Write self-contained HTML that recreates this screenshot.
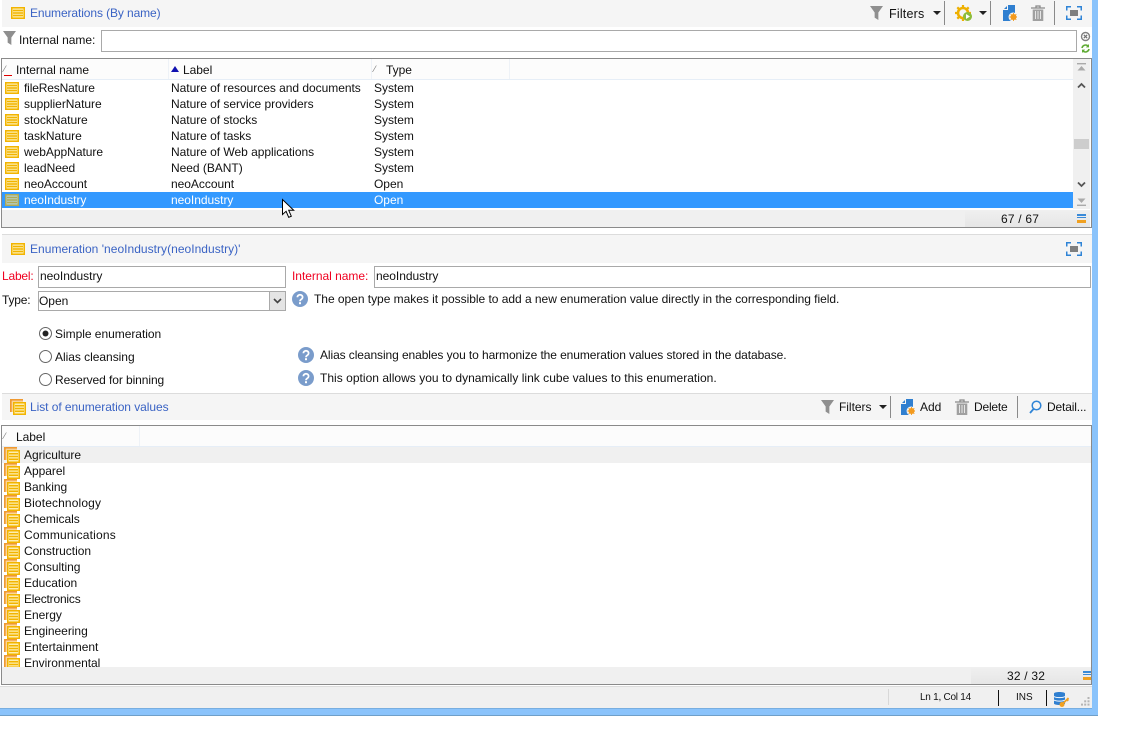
<!DOCTYPE html>
<html><head><meta charset="utf-8"><style>
html,body{margin:0;padding:0;width:1128px;height:746px;background:#fff;overflow:hidden}
body{position:relative;font-family:"Liberation Sans",sans-serif;font-size:12px;color:#111;letter-spacing:-.03px}
.a{position:absolute}
.t{position:absolute;white-space:nowrap;line-height:16px;height:16px}
.bar{position:absolute;background:#f5f5f5}
.blue{color:#3a63c4;letter-spacing:-.1px}
.red{color:#f00020}
.inp{position:absolute;background:#fff;border:1px solid #a9a9a9;box-sizing:border-box;line-height:19px;padding-left:1px}
.sep{position:absolute;width:1px;background:#8a8a8a}
svg{position:absolute;overflow:visible}
.row{position:absolute;height:16px;line-height:16px;white-space:nowrap}
</style></head><body>
<svg width="0" height="0" style="position:absolute">
<defs>
<symbol id="enum" viewBox="0 0 14 12"><rect x=".75" y=".75" width="12.5" height="10.500" fill="#fdeeb0" stroke="#f2b400" stroke-width="1.500"/><path d="M2 3.500h10M2 6h10M2 8.500h10" stroke="#f2b400" stroke-width="1.500"/></symbol>
<symbol id="enums" viewBox="0 0 16 16"><path d="M.9 13V.9H13" fill="none" stroke="#f09a30" stroke-width="1.800"/><rect x="2" y="2" width="11" height="11" fill="#fbc878" opacity=".75"/><rect x="3.750" y="3.750" width="11.500" height="11.500" fill="#fdeeb0" stroke="#f2b400" stroke-width="1.500"/><path d="M5 6.800h9M5 9.500h9M5 12.200h9" stroke="#f2b400" stroke-width="1.500"/></symbol>
<symbol id="funnel" viewBox="0 0 14 15"><path d="M0 0h14L9 7v8L5 12.500V7z" fill="#8f8f8f"/></symbol>
<symbol id="help" viewBox="0 0 16 16"><circle cx="8" cy="8" r="8" fill="#7a9ccb"/><path d="M5.400 6.200a2.600 2.400 0 1 1 4 2c-1 .7-1.400 1-1.400 2" fill="none" stroke="#fff" stroke-width="1.700"/><rect x="7" y="11.200" width="2" height="2" fill="#fff"/></symbol>
<symbol id="add" viewBox="0 0 14 16"><path d="M5 0h7v8a4 4 0 0 0-4 8H0V5h5z" fill="#2f7fd0"/><path d="M1 4l3-3v3z" fill="#2f7fd0"/><circle cx="10.500" cy="12" r="3" fill="#f39a1e"/><path d="M10.500 8v8M6.500 12h8M7.700 9.200l5.600 5.600M13.300 9.200l-5.600 5.600" stroke="#f39a1e" stroke-width=".9"/></symbol>
<symbol id="trash" viewBox="0 0 14 16"><path d="M0 3h14M5 3V1h4v2" fill="none" stroke="#8a8a8a" stroke-width="1.300"/><path d="M1.700 4.500h10.600V16H1.700z" fill="#a0a0a0"/><path d="M4.500 6v8M7 6v8M9.500 6v8" stroke="#e6e6e6" stroke-width="1"/></symbol>
<symbol id="focus" viewBox="0 0 16 14"><path d="M.75 4.500V.75H5M11 .75h4.250V4.500M15.250 9.500v3.750H11M5 13.250H.75V9.500" fill="none" stroke="#2f84d6" stroke-width="1.500"/><rect x="4" y="4" width="8" height="6" fill="#7f7f7f"/></symbol>
</defs></svg>

<!-- top bar -->
<div class="bar" style="left:2px;top:0;width:1090px;height:27px"></div>
<svg style="left:11px;top:7px" width="14" height="12"><use href="#enum"/></svg>
<div class="t blue" style="left:30px;top:5px;">Enumerations (By name)</div>
<svg style="left:870px;top:6px" width="13" height="14"><use href="#funnel"/></svg>
<div class="t" style="left:889px;top:6px;font-size:12.5px;letter-spacing:.2px">Filters</div>
<div class="a" style="left:933px;top:11px;border:4px solid transparent;border-top:4px solid #222;border-left-width:4px;width:0;height:0"></div>
<div class="sep" style="left:944px;top:1px;height:24px"></div>
<svg style="left:955px;top:5px" width="18" height="17" viewBox="0 0 18 17"><circle cx="8" cy="8" r="5" fill="none" stroke="#eeb000" stroke-width="2.600"/><path d="M8 0v3M8 13v3M0 8h3M13 8h3M2.300 2.300l2 2M11.700 11.700l2 2M13.700 2.300l-2 2M4.300 11.700l-2 2" stroke="#eeb000" stroke-width="2.200"/><circle cx="12.500" cy="11.500" r="4.500" fill="#8cbc3c"/><path d="M11 9l4 2.500-4 2.500z" fill="#fff"/></svg>
<div class="a" style="left:979px;top:11px;border:4px solid transparent;border-top:4px solid #222;width:0;height:0"></div>
<div class="sep" style="left:990px;top:1px;height:24px"></div>
<svg style="left:1003px;top:5px" width="14" height="16"><use href="#add"/></svg>
<svg style="left:1031px;top:5px" width="14" height="16"><use href="#trash"/></svg>
<div class="sep" style="left:1054px;top:1px;height:24px"></div>
<svg style="left:1066px;top:6px" width="16" height="14"><use href="#focus"/></svg>

<!-- filter -->
<svg style="left:3px;top:31px" width="13" height="14"><use href="#funnel"/></svg>
<div class="t" style="left:19px;top:32px">Internal name:</div>
<div class="inp" style="left:101px;top:30px;width:976px;height:22px"></div>
<svg style="left:1081px;top:32px" width="9" height="9" viewBox="0 0 9 9"><circle cx="4.500" cy="4.500" r="4" fill="#fff" stroke="#808080" stroke-width="1.400"/><path d="M2.800 2.800l3.400 3.400M6.200 2.800L2.800 6.200" stroke="#707070" stroke-width="1.200"/></svg>
<svg style="left:1081px;top:44px" width="9" height="9" viewBox="0 0 9 9"><path d="M1 4a3.600 3.600 0 0 1 6-2M8 5a3.600 3.600 0 0 1-6 2" fill="none" stroke="#5faa34" stroke-width="1.600"/><path d="M8 0v3.400H4.800zM1 9V5.600h3.200z" fill="#5faa34"/></svg>

<!-- table 1 -->
<div class="a" style="left:1px;top:58px;width:1091px;height:170px;border:1px solid #8a8a8a;box-sizing:border-box;background:#fff"></div>
<div class="a" style="left:2px;top:59px;width:1071px;height:20px;background:#fcfcfc;border-bottom:1px solid #e6eef7"></div>
<div class="a" style="left:168px;top:59px;width:1px;height:20px;background:#eef2f7"></div>
<div class="a" style="left:371px;top:59px;width:1px;height:20px;background:#eef2f7"></div>
<div class="a" style="left:509px;top:59px;width:1px;height:20px;background:#eef2f7"></div>
<div class="t" style="left:4px;top:61px;color:#777;font-size:9px">⁄</div>
<div class="a" style="left:4px;top:75px;width:8px;height:1px;background:#e00000"></div>
<div class="t" style="left:16px;top:62px">Internal name</div>
<div class="a" style="left:171px;top:66px;width:0;height:0;border:4px solid transparent;border-top:0;border-bottom:6px solid #1010b0"></div>
<div class="t" style="left:183px;top:62px">Label</div>
<div class="t" style="left:374px;top:61px;color:#777;font-size:9px">⁄</div>
<div class="t" style="left:386px;top:62px">Type</div>

<div class="a" style="left:2px;top:192px;width:1071px;height:16px;background:#3399ff"></div>

<svg style="left:5px;top:82px" width="14" height="12"><use href="#enum"/></svg>
<div class="row" style="left:24px;top:80px;letter-spacing:-.15px">fileResNature</div><div class="row" style="left:171px;top:80px">Nature of resources and documents</div><div class="row" style="left:374px;top:80px">System</div>
<svg style="left:5px;top:98px" width="14" height="12"><use href="#enum"/></svg>
<div class="row" style="left:24px;top:96px">supplierNature</div><div class="row" style="left:171px;top:96px">Nature of service providers</div><div class="row" style="left:374px;top:96px">System</div>
<svg style="left:5px;top:114px" width="14" height="12"><use href="#enum"/></svg>
<div class="row" style="left:24px;top:112px">stockNature</div><div class="row" style="left:171px;top:112px">Nature of stocks</div><div class="row" style="left:374px;top:112px">System</div>
<svg style="left:5px;top:130px" width="14" height="12"><use href="#enum"/></svg>
<div class="row" style="left:24px;top:128px">taskNature</div><div class="row" style="left:171px;top:128px">Nature of tasks</div><div class="row" style="left:374px;top:128px">System</div>
<svg style="left:5px;top:146px" width="14" height="12"><use href="#enum"/></svg>
<div class="row" style="left:24px;top:144px">webAppNature</div><div class="row" style="left:171px;top:144px">Nature of Web applications</div><div class="row" style="left:374px;top:144px">System</div>
<svg style="left:5px;top:162px" width="14" height="12"><use href="#enum"/></svg>
<div class="row" style="left:24px;top:160px">leadNeed</div><div class="row" style="left:171px;top:160px">Need (BANT)</div><div class="row" style="left:374px;top:160px">System</div>
<svg style="left:5px;top:178px" width="14" height="12"><use href="#enum"/></svg>
<div class="row" style="left:24px;top:176px">neoAccount</div><div class="row" style="left:171px;top:176px">neoAccount</div><div class="row" style="left:374px;top:176px">Open</div>
<svg style="left:5px;top:194px" width="14" height="12"><use href="#enum"/></svg>
<div class="a" style="left:5px;top:194px;width:14px;height:12px;background:rgba(51,153,255,.35)"></div>
<div class="row" style="left:24px;top:192px;color:#fff">neoIndustry</div><div class="row" style="left:171px;top:192px;color:#fff">neoIndustry</div><div class="row" style="left:374px;top:192px;color:#fff">Open</div>

<!-- scrollbar 1 -->
<div class="a" style="left:1073px;top:59px;width:17px;height:150px;background:#f0f0f0"></div>
<svg style="left:1076px;top:63px" width="11" height="9" viewBox="0 0 11 9"><path d="M1 .7h9" stroke="#aaa" stroke-width="1.400"/><path d="M5.500 3l4 4.500h-8z" fill="#aaa"/></svg>
<svg style="left:1077px;top:82px" width="9" height="7" viewBox="0 0 9 7"><path d="M1 5.500l3.500-3.500 3.500 3.500" fill="none" stroke="#555" stroke-width="1.800"/></svg>
<div class="a" style="left:1074px;top:139px;width:15px;height:10px;background:#cdcdcd"></div>
<svg style="left:1077px;top:181px" width="9" height="7" viewBox="0 0 9 7"><path d="M1 1.500l3.500 3.500 3.500-3.500" fill="none" stroke="#555" stroke-width="1.800"/></svg>
<svg style="left:1076px;top:197px" width="11" height="9" viewBox="0 0 11 9"><path d="M1 8.300h9" stroke="#aaa" stroke-width="1.400"/><path d="M5.500 6l4-4.500h-8z" fill="#aaa"/></svg>
<!-- footer 1 -->
<div class="a" style="left:2px;top:210px;width:1088px;height:17px;background:#f0f0f0"></div>
<div class="a" style="left:965px;top:210px;width:125px;height:17px;background:linear-gradient(#f0f0f0,#e6e6e6)"></div>
<div class="t" style="left:1001px;top:211px;letter-spacing:.2px">67 / 67</div>
<div class="a" style="left:1077px;top:214px;width:9px;height:2px;background:#3a8ad8"></div>
<div class="a" style="left:1077px;top:217px;width:9px;height:1px;background:#3a8ad8"></div>
<div class="a" style="left:1077px;top:220px;width:9px;height:3px;background:#f0a020"></div>

<svg style="left:282px;top:199px" width="13" height="19" viewBox="0 0 13 19"><path d="M.5.5v15l3.600-3.200 2.600 6 2.600-1.100-2.600-5.900h5z" fill="#fff" stroke="#000" stroke-width="1"/></svg>

<!-- section 2 -->
<div class="a" style="left:2px;top:234px;width:1090px;height:1px;background:#dcdcdc"></div>
<div class="bar" style="left:2px;top:235px;width:1090px;height:28px"></div>
<svg style="left:11px;top:243px" width="14" height="12"><use href="#enum"/></svg>
<div class="t blue" style="left:30px;top:241px;letter-spacing:.03px">Enumeration 'neoIndustry(neoIndustry)'</div>
<svg style="left:1066px;top:242px" width="16" height="14"><use href="#focus"/></svg>

<div class="t red" style="left:2px;top:268px;letter-spacing:-.2px">Label:</div>
<div class="inp" style="left:38px;top:266px;width:248px;height:22px">neoIndustry</div>
<div class="t red" style="left:292px;top:268px">Internal name:</div>
<div class="inp" style="left:374px;top:266px;width:717px;height:22px">neoIndustry</div>
<div class="t" style="left:2px;top:292px;letter-spacing:-.2px">Type:</div>
<div class="inp" style="left:38px;top:291px;width:248px;height:20px;line-height:18px;padding-left:0">Open</div>
<div class="a" style="left:269px;top:292px;width:16px;height:18px;background:#e4e4e4;border-left:1px solid #aaa;box-sizing:border-box"></div>
<svg style="left:273px;top:298px" width="9" height="6" viewBox="0 0 9 6"><path d="M1 1l3.500 3.500L8 1" fill="none" stroke="#444" stroke-width="1.600"/></svg>
<svg style="left:292px;top:291px" width="16" height="16"><use href="#help"/></svg>
<div class="t" style="left:314px;top:291px">The open type makes it possible to add a new enumeration value directly in the corresponding field.</div>

<svg style="left:39px;top:327px" width="13" height="13" viewBox="0 0 13 13"><circle cx="6.500" cy="6.500" r="6" fill="#fff" stroke="#666"/><circle cx="6.500" cy="6.500" r="3" fill="#222"/></svg>
<div class="t" style="left:55px;top:326px">Simple enumeration</div>
<svg style="left:39px;top:350px" width="13" height="13" viewBox="0 0 13 13"><circle cx="6.500" cy="6.500" r="6" fill="#fff" stroke="#666"/></svg>
<div class="t" style="left:55px;top:349px">Alias cleansing</div>
<svg style="left:39px;top:373px" width="13" height="13" viewBox="0 0 13 13"><circle cx="6.500" cy="6.500" r="6" fill="#fff" stroke="#666"/></svg>
<div class="t" style="left:55px;top:372px;letter-spacing:-.08px">Reserved for binning</div>
<svg style="left:298px;top:347px" width="16" height="16"><use href="#help"/></svg>
<div class="t" style="left:320px;top:347px;letter-spacing:-.09px">Alias cleansing enables you to harmonize the enumeration values stored in the database.</div>
<svg style="left:298px;top:370px" width="16" height="16"><use href="#help"/></svg>
<div class="t" style="left:320px;top:370px;letter-spacing:.025px">This option allows you to dynamically link cube values to this enumeration.</div>

<!-- section 3 -->
<div class="a" style="left:2px;top:393px;width:1090px;height:1px;background:#dcdcdc"></div>
<div class="bar" style="left:2px;top:394px;width:1090px;height:26px"></div>
<svg style="left:10px;top:399px" width="16" height="16"><use href="#enums"/></svg>
<div class="t blue" style="left:30px;top:399px;letter-spacing:-.06px">List of enumeration values</div>
<svg style="left:821px;top:400px" width="13" height="14"><use href="#funnel"/></svg>
<div class="t" style="left:839px;top:399px">Filters</div>
<div class="a" style="left:879px;top:405px;border:4px solid transparent;border-top:4px solid #222;width:0;height:0"></div>
<div class="sep" style="left:890px;top:396px;height:22px"></div>
<svg style="left:901px;top:399px" width="14" height="16"><use href="#add"/></svg>
<div class="t" style="left:920px;top:399px">Add</div>
<svg style="left:955px;top:399px" width="14" height="16"><use href="#trash"/></svg>
<div class="t" style="left:974px;top:399px;letter-spacing:-.2px">Delete</div>
<div class="sep" style="left:1017px;top:396px;height:22px"></div>
<svg style="left:1029px;top:400px" width="13" height="14" viewBox="0 0 13 14"><circle cx="7.500" cy="5.500" r="4.300" fill="none" stroke="#2f84d6" stroke-width="1.500"/><path d="M4.500 9L1 13" stroke="#2f84d6" stroke-width="1.800"/></svg>
<div class="t" style="left:1047px;top:399px;letter-spacing:-.15px">Detail...</div>

<!-- table 2 -->
<div class="a" style="left:1px;top:425px;width:1091px;height:260px;border:1px solid #8a8a8a;box-sizing:border-box;background:#fff"></div>
<div class="a" style="left:2px;top:426px;width:1089px;height:20px;background:#fcfcfc;border-bottom:1px solid #e6eef7"></div>
<div class="a" style="left:139px;top:426px;width:1px;height:20px;background:#eef2f7"></div>
<div class="t" style="left:4px;top:428px;color:#777;font-size:9px">⁄</div>
<div class="t" style="left:16px;top:429px">Label</div>
<div class="a" style="left:2px;top:447px;width:1089px;height:16px;background:#f0f0f0"></div>

<div class="a" style="left:2px;top:447px;width:1089px;height:221px;overflow:hidden">
<svg style="left:2px;top:0" width="16" height="16"><use href="#enums"/></svg><div class="row" style="left:22px;top:0">Agriculture</div>
<svg style="left:2px;top:16px" width="16" height="16"><use href="#enums"/></svg><div class="row" style="left:22px;top:16px">Apparel</div>
<svg style="left:2px;top:32px" width="16" height="16"><use href="#enums"/></svg><div class="row" style="left:22px;top:32px">Banking</div>
<svg style="left:2px;top:48px" width="16" height="16"><use href="#enums"/></svg><div class="row" style="left:22px;top:48px;letter-spacing:.13px">Biotechnology</div>
<svg style="left:2px;top:64px" width="16" height="16"><use href="#enums"/></svg><div class="row" style="left:22px;top:64px">Chemicals</div>
<svg style="left:2px;top:80px" width="16" height="16"><use href="#enums"/></svg><div class="row" style="left:22px;top:80px;letter-spacing:.18px">Communications</div>
<svg style="left:2px;top:96px" width="16" height="16"><use href="#enums"/></svg><div class="row" style="left:22px;top:96px">Construction</div>
<svg style="left:2px;top:112px" width="16" height="16"><use href="#enums"/></svg><div class="row" style="left:22px;top:112px">Consulting</div>
<svg style="left:2px;top:128px" width="16" height="16"><use href="#enums"/></svg><div class="row" style="left:22px;top:128px">Education</div>
<svg style="left:2px;top:144px" width="16" height="16"><use href="#enums"/></svg><div class="row" style="left:22px;top:144px;letter-spacing:-.2px">Electronics</div>
<svg style="left:2px;top:160px" width="16" height="16"><use href="#enums"/></svg><div class="row" style="left:22px;top:160px">Energy</div>
<svg style="left:2px;top:176px" width="16" height="16"><use href="#enums"/></svg><div class="row" style="left:22px;top:176px">Engineering</div>
<svg style="left:2px;top:192px" width="16" height="16"><use href="#enums"/></svg><div class="row" style="left:22px;top:192px">Entertainment</div>
<svg style="left:2px;top:208px" width="16" height="16"><use href="#enums"/></svg><div class="row" style="left:22px;top:208px">Environmental</div>
</div>
<!-- footer 2 -->
<div class="a" style="left:2px;top:667px;width:1089px;height:17px;background:#f0f0f0"></div>
<div class="a" style="left:971px;top:667px;width:120px;height:17px;background:linear-gradient(#f0f0f0,#e6e6e6)"></div>
<div class="t" style="left:1007px;top:668px;letter-spacing:.2px">32 / 32</div>
<div class="a" style="left:1083px;top:671px;width:8px;height:2px;background:#3a8ad8"></div>
<div class="a" style="left:1083px;top:674px;width:8px;height:1px;background:#3a8ad8"></div>
<div class="a" style="left:1083px;top:677px;width:8px;height:3px;background:#f0a020"></div>

<!-- status -->
<div class="a" style="left:0;top:686px;width:1092px;height:1px;background:#dcdcdc"></div>
<div class="a" style="left:0;top:687px;width:1092px;height:21px;background:#f0f0f0"></div>
<div class="a" style="left:888px;top:689px;width:1px;height:16px;background:#d8d8d8"></div>
<div class="t" style="left:920px;top:690px;font-size:10px;letter-spacing:-.25px">Ln 1, Col 14</div>
<div class="a" style="left:998px;top:690px;width:1px;height:16px;background:#111"></div>
<div class="t" style="left:1016px;top:690px;font-size:10px;letter-spacing:0">INS</div>
<div class="a" style="left:1046px;top:690px;width:1px;height:16px;background:#111"></div>
<svg style="left:1053px;top:691px" width="17" height="17" viewBox="0 0 17 17"><path d="M1 2.500C1 .5 12 .5 12 2.500v10C12 14.500 1 14.500 1 12.500z" fill="#2f7fd0"/><path d="M1 5.500c2 1.500 9 1.500 11 0M1 9c2 1.500 9 1.500 11 0" fill="none" stroke="#fff" stroke-width="1"/><circle cx="9" cy="13.500" r="2.500" fill="#f0a020"/><path d="M10.500 12l5-5" stroke="#f0a020" stroke-width="1.800"/><path d="M14 10l1.500-1.500" stroke="#f0a020" stroke-width="1.500"/></svg>
<svg style="left:1081px;top:697px" width="9" height="9" viewBox="0 0 9 9" fill="#b4b4b4"><rect x="6.500" y="0" width="2" height="2"/><rect x="3.200" y="3.300" width="2" height="2"/><rect x="6.500" y="3.300" width="2" height="2"/><rect x="0" y="6.600" width="2" height="2"/><rect x="3.200" y="6.600" width="2" height="2"/><rect x="6.500" y="6.600" width="2" height="2"/></svg>

<!-- window frame -->
<div class="a" style="left:1092px;top:0;width:6px;height:716px;background:#8ac3fb"></div>
<div class="a" style="left:0;top:708px;width:1098px;height:7px;background:#8ac3fb"></div>
<div class="a" style="left:0;top:715px;width:1098px;height:1px;background:#6f9fc8"></div>
<div class="a" style="left:0;top:708px;width:1092px;height:1px;background:#78aee0"></div>
</body></html>
